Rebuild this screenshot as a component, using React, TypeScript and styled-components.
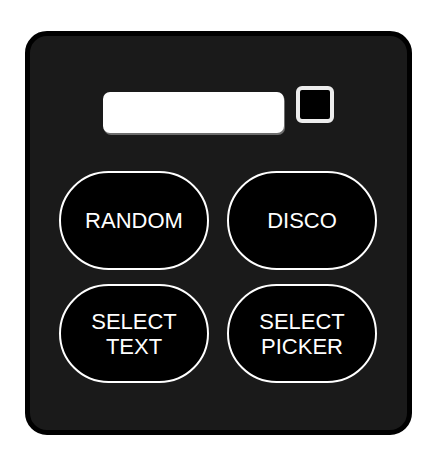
import React from 'react';
import styled, { createGlobalStyle } from 'styled-components';

const GlobalStyle = createGlobalStyle`
  body {
    margin: 0;
    background: #fff;
    font-family: 'Liberation Sans', Arial, sans-serif;
  }
`;

const Panel = styled.div`
  box-sizing: border-box;
  width: 387px;
  margin: 31px auto 0;
  padding: 50px 0 47px;
  border: 5px solid #000;
  border-radius: 22px;
  background: #1a1a1a;
  display: flex;
  flex-direction: column;
  align-items: center;
  gap: 38px;
`;

const InputRow = styled.div`
  display: flex;
  align-items: flex-start;
  gap: 12px;
`;

const TextField = styled.input`
  box-sizing: border-box;
  width: 181px;
  height: 41px;
  margin-top: 6px;
  border: none;
  border-radius: 7px;
  background: #fff;
  box-shadow: 1px 2px 0 #6e6e6e;
  outline: none;
`;

const Check = styled.input`
  appearance: none;
  box-sizing: border-box;
  width: 38px;
  height: 37px;
  margin: 0;
  border: 4px solid #ededed;
  border-radius: 6px;
  background: #000;
`;

const ButtonGrid = styled.div`
  display: grid;
  grid-template-columns: 150px 150px;
  grid-auto-rows: 99px;
  column-gap: 18px;
  row-gap: 14px;
`;

const PillButton = styled.button`
  box-sizing: border-box;
  border: 2px solid #fff;
  border-radius: 50px;
  background: #000;
  color: #fff;
  font-family: 'Liberation Sans', Arial, sans-serif;
  font-size: 22px;
  line-height: 25px;
  padding: 0 10px;
  cursor: pointer;
`;

const labels = ['RANDOM', 'DISCO', 'SELECT TEXT', 'SELECT PICKER'];

export default function App() {
  return (
    <>
      <GlobalStyle />
      <Panel>
        <InputRow>
          <TextField type="text" />
          <Check type="checkbox" />
        </InputRow>
        <ButtonGrid>
          {labels.map((l) => (
            <PillButton key={l}>
              {l.split(' ').map((w, i) => (
                <React.Fragment key={w}>
                  {i > 0 && <br />}
                  {w}
                </React.Fragment>
              ))}
            </PillButton>
          ))}
        </ButtonGrid>
      </Panel>
    </>
  );
}
